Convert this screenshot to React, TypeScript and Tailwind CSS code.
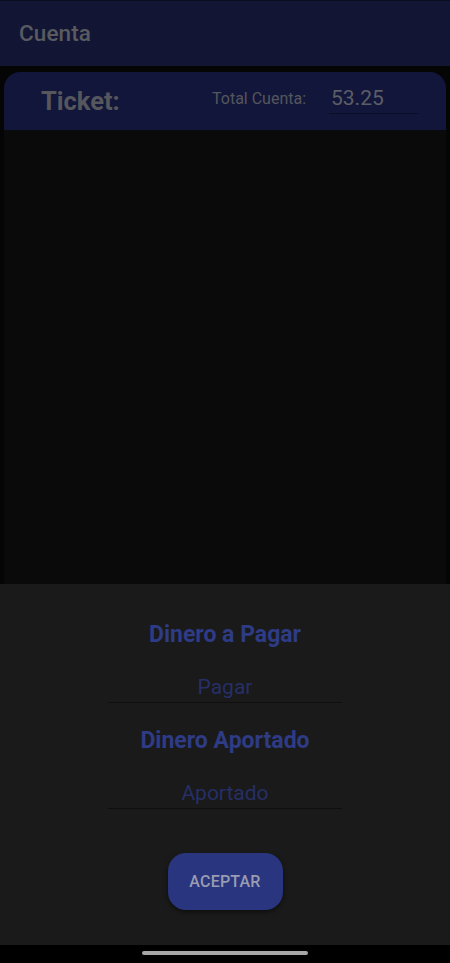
import React from "react";

export default function App() {
  return (
    <div className="w-[450px] h-[963px] bg-[#050505] flex flex-col overflow-hidden" style={{ fontFamily: "Roboto, 'Noto Sans', sans-serif" }}>
      <div className="h-[66px] shrink-0 bg-[#121634] border-t border-[#0a0c20] flex items-center pl-[19px]">
        <span className="text-[22.5px] font-medium text-[#5a5b60] tracking-[0.1px]">Cuenta</span>
      </div>
      <div className="flex-1 flex flex-col pt-[6px] px-[4px]">
        <div className="flex-1 flex flex-col rounded-t-[16px] overflow-hidden bg-[#0a0a0a]">
          <div className="h-[58px] shrink-0 bg-[#12163a] flex items-center">
            <span className="ml-[37px] w-[78px] text-[25.5px] font-bold text-[#56575c] whitespace-nowrap">Ticket:</span>
            <span className="ml-[93px] w-[94px] text-[16px] text-[#55565d] mt-[-4px] whitespace-nowrap">Total Cuenta:</span>
            <div className="ml-[23px] w-[90px] mt-[-4px] border-b border-[#0b0e26] pb-[1px] pl-[2px]">
              <span className="text-[21px] leading-[26px] text-[#5c5d66]">53.25</span>
            </div>
          </div>
        </div>
      </div>
      <div className="h-[361px] shrink-0 bg-[#1a1a1a] flex flex-col items-center pt-[36px]">
        <span className="text-[23px] font-bold text-[#2e3b85] leading-[30px]">Dinero a Pagar</span>
        <div className="mt-[24px] w-[234px] border-b border-[#0f0f0f] flex justify-center pb-[2px]">
          <span className="text-[21px] text-[#262f66] leading-[26px]">Pagar</span>
        </div>
        <span className="mt-[23px] text-[23px] font-bold text-[#2e3b85] leading-[30px]">Dinero Aportado</span>
        <div className="mt-[24px] w-[234px] border-b border-[#0f0f0f] flex justify-center pb-[2px]">
          <span className="text-[21px] text-[#262f66] leading-[26px]">Aportado</span>
        </div>
        <button className="mt-[44px] w-[115px] h-[57px] rounded-[18px] bg-[#29367f] shadow-[0_2px_4px_rgba(0,0,0,0.5)] text-[16px] font-medium text-[#9a9cb0] tracking-[0.2px]">
          ACEPTAR
        </button>
      </div>
      <div className="h-[18px] shrink-0 bg-black flex justify-center pt-[6px]">
        <div className="w-[166px] h-[4px] rounded-full bg-[#a6a6a6]" />
      </div>
    </div>
  );
}
